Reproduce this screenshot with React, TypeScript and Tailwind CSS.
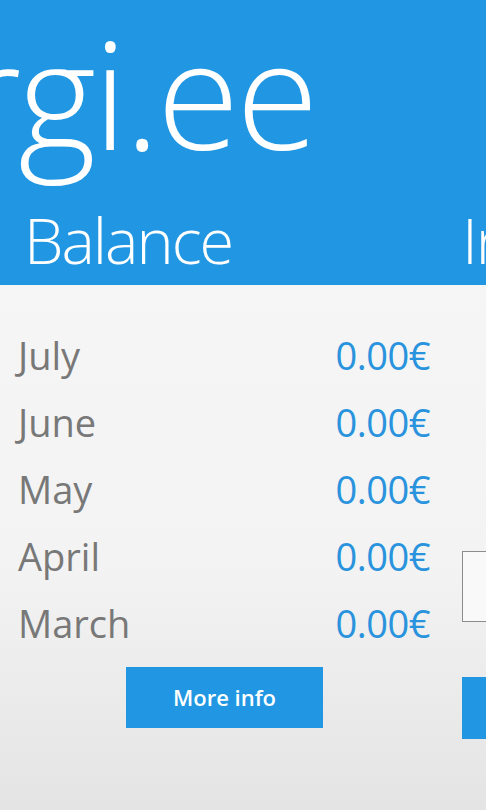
import React from "react";

const months = ["July", "June", "May", "April", "March"];

export default function App() {
  return (
    <div className="w-[486px] h-[810px] overflow-hidden flex flex-col bg-linear-to-b from-[#f8f8f8] via-[#f3f3f3] via-70% to-[#e4e4e4] font-['Open_Sans',sans-serif]">
      <div className="h-[285px] shrink-0 bg-[#2197e3] overflow-hidden text-white">
        <div className="mt-[17px] -ml-[37px] h-[150px] text-[150px] leading-[150px] font-light tracking-[-3px] whitespace-nowrap">
          rgi.ee
        </div>
        <div className="mt-[41px] flex whitespace-nowrap text-[63px] leading-[63px] font-light tracking-[-2px]">
          <div className="ml-[24px] w-[438px] shrink-0">Balance</div>
          <div className="shrink-0">Invoices</div>
        </div>
      </div>
      <div className="flex flex-1 overflow-hidden">
        <div className="w-[462px] shrink-0 pt-[37px]">
          <div className="pl-[18px] w-[430px]">
            {months.map((m) => (
              <div key={m} className="h-[67px] flex items-baseline justify-between leading-[67px]">
                <span className="text-[38px] text-[#787878]">{m}</span>
                <span className="text-[38px] tracking-[-0.5px] text-[#2a93dd]">0.00€</span>
              </div>
            ))}
          </div>
          <div className="mt-[10px] ml-[126px] w-[197px] h-[61px] bg-[#2197e3] flex items-center justify-center text-white text-[22px] font-semibold">
            More info
          </div>
        </div>
        <div className="shrink-0 w-[300px] pt-[266px]">
          <div className="h-[71px] w-[300px] border-[1.5px] border-[#8c8c8c] bg-[#f9f9f9]" />
          <div className="mt-[55px] h-[62px] w-[300px] bg-[#2197e3]" />
        </div>
      </div>
    </div>
  );
}
